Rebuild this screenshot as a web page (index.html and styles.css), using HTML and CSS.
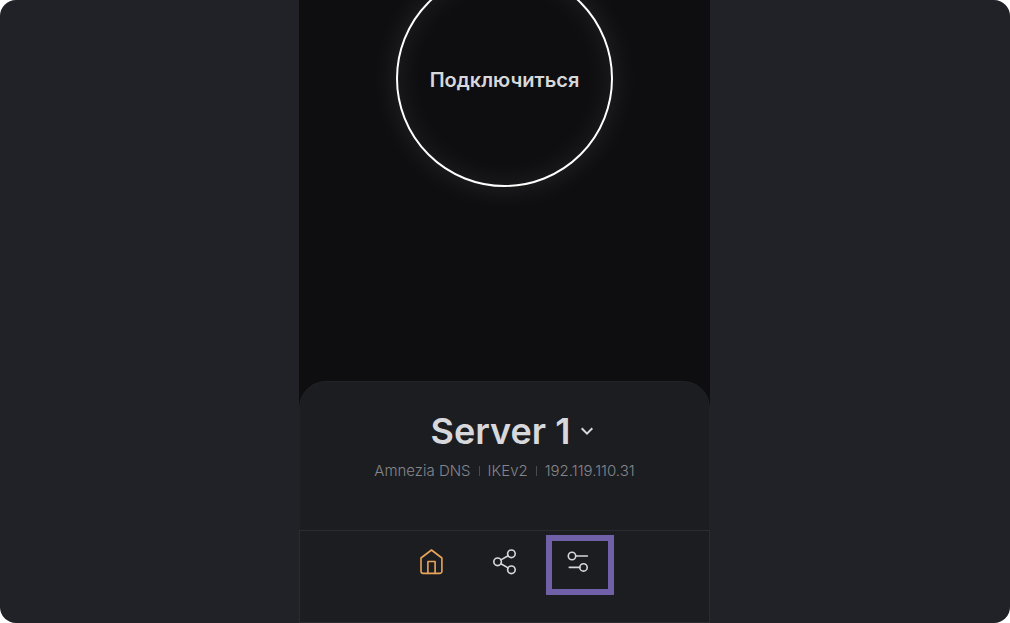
FILE: index.html
```html
<!DOCTYPE html>
<html lang="ru">
<head>
<meta charset="utf-8">
<meta name="viewport" content="width=device-width, initial-scale=1">
<title>Amnezia</title>
<link rel="stylesheet" href="styles.css">
</head>
<body>
<div class="stage">
  <div class="app">
    <main class="home">
      <button class="connect" type="button">Подключиться</button>
    </main>
    <section class="panel">
      <button class="server" type="button">
        <span class="server-name">Server 1</span>
        <svg class="chevron" viewBox="0 0 14 10" aria-hidden="true"><path d="M1.700 2.300l5.300 5.300 5.300-5.300"/></svg>
      </button>
      <ul class="details">
        <li>Amnezia DNS</li>
        <li>IKEv2</li>
        <li>192.119.110.31</li>
      </ul>
    </section>
    <nav class="tabs">
      <button class="tab tab-active" type="button" aria-label="Главная">
        <svg class="icon" viewBox="0 0 28 28" aria-hidden="true"><path d="M3 10L13.500 2l10.400 8v13.200a2.200 2.200 0 0 1-2.200 2.200H5.200a2.200 2.200 0 0 1-2.200-2.200z"/><path d="M9.900 25.400V13.500h7.200v11.900"/></svg>
      </button>
      <button class="tab" type="button" aria-label="Поделиться">
        <svg class="icon" viewBox="0 0 28 28" aria-hidden="true"><circle cx="20.400" cy="5.800" r="3.800"/><circle cx="6.600" cy="13.800" r="3.800"/><circle cx="20.400" cy="21.800" r="3.800"/><path d="M9.900 11.900l7.200-4.200M9.900 15.700l7.200 4.200"/></svg>
      </button>
      <button class="tab tab-marked" type="button" aria-label="Настройки">
        <svg class="icon" viewBox="0 0 28 28" aria-hidden="true"><circle cx="8" cy="8" r="3.700"/><path d="M11.700 8H23.400M5.300 19.400h10.500"/><circle cx="19.500" cy="19.400" r="3.700"/></svg>
      </button>
    </nav>
  </div>
</div>
</body>
</html>
```
FILE: styles.css
```css
*,
*::before,
*::after {
  box-sizing: border-box;
}

body {
  margin: 0;
  background: #fff;
  color: #d7d8db;
  font-family: Inter, Roboto, sans-serif;
}

button {
  padding: 0;
  border: 0;
  background: none;
  color: inherit;
  font: inherit;
  cursor: pointer;
}

.stage {
  display: flex;
  justify-content: center;
  min-height: 100vh;
  padding-right: 1px;
  overflow: hidden;
  border-radius: 16px;
  background: #212227;
}

.app {
  display: flex;
  flex-direction: column;
  width: 100%;
  max-width: 411px;
  background: #0e0e10;
}

.home {
  display: flex;
  flex: 1;
  align-items: flex-start;
  justify-content: center;
}

.connect {
  width: 217px;
  height: 217px;
  margin-top: -30px;
  padding-top: 2px;
  border: 2px solid #fff;
  border-radius: 50%;
  box-shadow: 0 0 30px rgba(255, 255, 255, 0.1), inset 0 0 30px rgba(255, 255, 255, 0.08);
  font-size: 20px;
  font-weight: 600;
}

.panel {
  display: flex;
  flex-direction: column;
  align-items: center;
  padding: 25px 16px 49px;
  border: 1px solid #212225;
  border-bottom: 0;
  border-radius: 27px 27px 0 0;
  background: #1c1d21;
}

.server {
  display: flex;
  align-items: center;
  gap: 10px;
  margin-left: 16px;
}

.server-name {
  font-size: 36px;
  font-weight: 600;
  line-height: 48px;
}

.chevron {
  width: 14px;
  height: 10px;
  fill: none;
  stroke: currentColor;
  stroke-width: 2;
}

.details {
  display: flex;
  margin: 6px 0 0;
  padding: 0;
  color: #84868c;
  font-size: 15px;
  font-weight: 300;
  line-height: 20px;
  list-style: none;
}

.details li {
  display: flex;
  align-items: center;
}

.details li + li::before {
  width: 1px;
  height: 10px;
  margin: 0 8px;
  background: #494b50;
  content: "";
}

.tabs {
  display: flex;
  justify-content: center;
  gap: 5px;
  height: 93px;
  border: 1px solid #2b2c30;
  background: #1c1d21;
}

.tab {
  position: relative;
  display: flex;
  justify-content: center;
  width: 68px;
  height: 64px;
  padding-top: 17px;
}

.tab-active {
  color: #eba55b;
}

.tab-marked::after {
  position: absolute;
  top: 4px;
  left: 2px;
  width: 68px;
  height: 60px;
  border: 6px solid #7060a8;
  content: "";
}

.icon {
  width: 28px;
  height: 28px;
  fill: none;
  stroke: currentColor;
  stroke-width: 1.6;
  stroke-linecap: round;
  stroke-linejoin: round;
}
```
